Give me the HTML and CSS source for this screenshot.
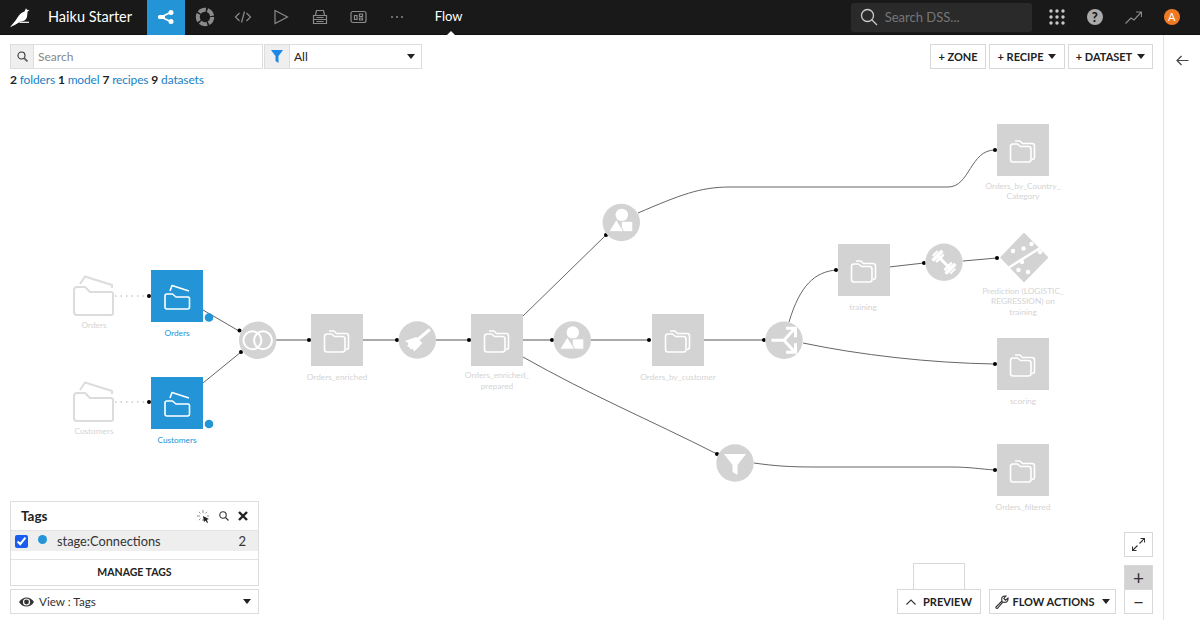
FILE: index.html
```html
<!DOCTYPE html>
<html lang="en">
<head>
<meta charset="utf-8">
<title>Haiku Starter - Flow</title>
<link rel="stylesheet" href="styles.css">
</head>
<body>
<div class="app">
  <header class="topbar">
    <div class="logo">
      <svg width="37" height="35" viewBox="0 0 37 35"><path class="fill-w" d="M10 27.200C13 23.500 15.500 21 17.500 17.500C19.500 14 22 12 24.500 11.500L26 8.300L27 9.800L29.500 10.300L27.600 11.600L27 17C26.200 20 23.500 21.600 20 21.700C17 23.800 13.500 25.800 10 27.200Z"/><path class="line-w" d="M19.500 22.300H29"/></svg>
    </div>
    <div class="project">Haiku Starter</div>
    <nav class="nav">
      <a class="nav-item active"><svg width="18" height="14" viewBox="0 0 18 14"><path class="line-w2" d="M4 7L13.500 2.500M4 7L13.500 11.500"/><rect class="fill-w" x="1" y="5" width="7" height="4" rx="1.500"/><circle class="fill-w" cx="14" cy="2.500" r="2.500"/><circle class="fill-w" cx="14" cy="11.500" r="2.500"/></svg></a>
      <a class="nav-item"><svg width="20" height="20" viewBox="0 0 20 20"><circle class="ring" cx="10" cy="10" r="7.200"/></svg></a>
      <a class="nav-item"><svg width="18" height="14" viewBox="0 0 18 14"><path class="line-g" d="M5.500 3L1.500 7L5.500 11M12.500 3L16.500 7L12.500 11M10.500 1.500L7.500 12.500"/></svg></a>
      <a class="nav-item"><svg width="16" height="16" viewBox="0 0 16 16"><path class="line-g" d="M2 1.500L14.500 8L2 14.500Z"/></svg></a>
      <a class="nav-item"><svg width="16" height="16" viewBox="0 0 16 16"><path class="line-g" d="M3.500 6L4.500 1.500H11.500L12.500 6M1.500 6.500H14.500V10.500H1.500ZM1.500 10.500V14.500H14.500V10.500M4.500 8.500H11.500M4.500 12.500H11.500"/></svg></a>
      <a class="nav-item"><svg width="17" height="14" viewBox="0 0 17 14"><rect class="line-g" x="1" y="1.500" width="15" height="11" rx="2"/><path class="line-g" d="M4.500 5.500V9.500H7V5.500ZM9.500 4H12.500V6.500H9.500ZM9.500 8H12.500V10H9.500Z"/></svg></a>
      <a class="nav-item"><svg width="14" height="4" viewBox="0 0 14 4"><circle class="fill-g" cx="2" cy="2" r="1"/><circle class="fill-g" cx="7" cy="2" r="1"/><circle class="fill-g" cx="12" cy="2" r="1"/></svg></a>
    </nav>
    <div class="section-title">Flow<span class="caret-up"></span></div>
    <div class="global-search">
      <svg width="18" height="18" viewBox="0 0 18 18"><circle class="line-lg" cx="7.500" cy="7.500" r="6"/><path class="line-lg" d="M12 12L17 17"/></svg>
      <span>Search DSS...</span>
    </div>
    <div class="top-icons">
      <svg class="top-icon" width="16" height="16" viewBox="0 0 16 16"><g class="fill-lg"><circle cx="2" cy="2" r="1.700"/><circle cx="8" cy="2" r="1.700"/><circle cx="14" cy="2" r="1.700"/><circle cx="2" cy="8" r="1.700"/><circle cx="8" cy="8" r="1.700"/><circle cx="14" cy="8" r="1.700"/><circle cx="2" cy="14" r="1.700"/><circle cx="8" cy="14" r="1.700"/><circle cx="14" cy="14" r="1.700"/></g></svg>
      <span class="help">?</span>
      <svg class="top-icon" width="17" height="13" viewBox="0 0 17 13"><path class="line-g" d="M0.500 12.500L6 7L9 9L16 1.500M11 1H16.500V6"/></svg>
      <span class="avatar">A</span>
    </div>
  </header>
  <main class="main">
    <section class="canvas">
      <svg class="flow" width="1163" height="585" viewBox="0 35 1163 585">
        <defs>
          <symbol id="dataset" viewBox="0 0 52 52"><rect width="52" height="52" fill="#d3d3d3"/><path class="ico" d="M13.500 22.500a2.500 2.500 0 0 1 2.500-2.500h4.500l3 2.500h8a2.500 2.500 0 0 1 2.500 2.500v10.500a2.500 2.500 0 0 1-2.500 2.500H16a2.500 2.500 0 0 1-2.500-2.500ZM18 17h5l2.500 2.500h9.500a2.500 2.500 0 0 1 2.500 2.500v11a2.500 2.500 0 0 1-2.500 2.500"/></symbol>
          <symbol id="folder-sel" viewBox="0 0 52 52"><rect width="52" height="52" fill="#2394d6"/><path class="ico" d="M14 26a2 2 0 0 1 2-2h5.500l3.500 3h12a1.500 1.500 0 0 1 1.500 1.500V37a2 2 0 0 1-2 2H16a2 2 0 0 1-2-2ZM19 21L21 15.500L38 21"/></symbol>
          <symbol id="folder-src" viewBox="0 0 42 42"><path class="src" d="M1 15a3 3 0 0 1 3-3h8l5 5h21a2 2 0 0 1 2 2v19a2 2 0 0 1-2 2H4a3 3 0 0 1-3-3ZM7 9L12 1.500L39 10V13"/></symbol>
          <g id="group-ico"><circle fill="#fff" cx="0.500" cy="-7.500" r="6.200"/><rect fill="#fff" stroke="#d3d3d3" x="0" y="-1.200" width="11.500" height="10.400"/><path fill="#fff" stroke="#d3d3d3" d="M-12.500 9.200L-5-3L2.500 9.200Z"/></g>
        </defs>
        <g class="dotted"><path d="M115 296H149M115 402H149"/></g>
        <g class="edge">
          <path d="M203 310L239 331M203 383L241 352"/>
          <path d="M523 316L606 235M638 213C680 195 700 187 730 187L948 187C970 187 970 150 995 150"/>
          <path d="M523 357C590 395 650 420 717 454M754 463C775 466 790 467 815 467L950 467C970 467 980 469 995 470"/>
          <path d="M789 322C800 285 815 272 836 270M889 267L924 263M963 261L997 258M803 343C860 355 930 363 995 364"/>
        </g>
        <path class="thick" d="M276 340H309M363 340H397M436 340H469M523 340H552M591 340H649M704 340H764"/>
        <g class="dots">
          <circle cx="149" cy="296" r="2"/><circle cx="149" cy="402" r="2"/><circle cx="239.500" cy="330.500" r="2"/><circle cx="241" cy="352" r="2"/><circle cx="309" cy="340" r="2"/><circle cx="397" cy="340" r="2"/><circle cx="469" cy="340" r="2"/><circle cx="552" cy="340" r="2"/><circle cx="649" cy="340" r="2"/><circle cx="764" cy="340" r="2"/><circle cx="606" cy="235" r="2"/><circle cx="995" cy="150" r="2"/><circle cx="717" cy="454" r="2"/><circle cx="995" cy="470" r="2"/><circle cx="836" cy="270" r="2"/><circle cx="924" cy="263" r="2"/><circle cx="997" cy="258" r="2"/><circle cx="995" cy="364" r="2"/>
        </g>
        <use href="#folder-src" x="73" y="275" width="42" height="42"/>
        <use href="#folder-src" x="73" y="381" width="42" height="42"/>
        <use href="#folder-sel" x="151" y="270" width="52" height="52"/>
        <use href="#folder-sel" x="151" y="377" width="52" height="52"/>
        <circle class="tag-dot" cx="209" cy="317.500" r="4.300"/>
        <circle class="tag-dot" cx="209" cy="424" r="4.300"/>
        <use href="#dataset" x="311" y="314" width="52" height="52"/>
        <use href="#dataset" x="471" y="314" width="52" height="52"/>
        <use href="#dataset" x="652" y="314" width="52" height="52"/>
        <use href="#dataset" x="997" y="124" width="52" height="52"/>
        <use href="#dataset" x="838" y="244" width="52" height="52"/>
        <use href="#dataset" x="997" y="338" width="52" height="52"/>
        <use href="#dataset" x="997" y="444" width="52" height="52"/>
        <circle class="recipe" cx="257.700" cy="340.300" r="18.700"/>
        <g transform="translate(257.700 340.300)"><circle class="ico2" cx="-5.300" r="9"/><circle class="ico2" cx="5.300" r="9"/></g>
        <circle class="recipe" cx="417.300" cy="340" r="18.700"/>
        <g transform="translate(417.300 340)" fill="#fff"><path class="ico3" d="M0 0L12.500-10.500"/><path d="M-1-3L5 3L1.500 7L-3 11.500L-5 8.500L-7 9.500L-8 7L-10 6.500L-9 3L-12.500 1Z"/></g>
        <circle class="recipe" cx="572.300" cy="340" r="18.700"/>
        <use href="#group-ico" transform="translate(572.300 340)"/>
        <circle class="recipe" cx="621.300" cy="222.500" r="18.700"/>
        <use href="#group-ico" transform="translate(621.300 222.500)"/>
        <circle class="recipe" cx="784" cy="340.300" r="18.700"/>
        <path class="ico3" transform="translate(784 340.300)" d="M-12.500 0H0L11-12M2-12H11.500V-3M0 0L11 12M2 12H11.500V3"/>
        <circle class="recipe" cx="944" cy="262.300" r="18.700"/>
        <g transform="translate(944 262.300) rotate(45)" fill="#fff"><rect x="-8" y="-1.500" width="16" height="3"/><rect x="-11" y="-7" width="3.500" height="14" rx="1"/><rect x="-7" y="-5.500" width="2.500" height="11" rx="1"/><rect x="7.500" y="-7" width="3.500" height="14" rx="1"/><rect x="4.500" y="-5.500" width="2.500" height="11" rx="1"/><rect x="-13.500" y="-3.500" width="2" height="7"/><rect x="11.500" y="-3.500" width="2" height="7"/></g>
        <circle class="recipe" cx="735" cy="463" r="18.700"/>
        <path transform="translate(735 463)" fill="#fff" d="M-11-9H11L2.500 2V12L-2.500 9V2Z"/>
        <path fill="#d3d3d3" d="M1024 232.500L1048.500 257.500L1024 282.500L1000 257.500Z"/>
        <path class="band" d="M1009 267.500L1040 248"/>
        <g fill="#fff"><circle cx="1013" cy="251" r="2.200"/><circle cx="1023.500" cy="248.500" r="2.200"/><circle cx="1031.500" cy="244" r="2.200"/><circle cx="1040" cy="252" r="2.200"/><circle cx="1022" cy="262" r="2.200"/><circle cx="1018.500" cy="270" r="2.200"/><circle cx="1028" cy="272" r="2.200"/></g>
        <g class="lbl">
          <text x="94" y="328">Orders</text><text x="94" y="434">Customers</text>
          <text x="337" y="380">Orders_enriched</text>
          <text x="497" y="378">Orders_enriched_</text><text x="497" y="389">prepared</text>
          <text x="678" y="380">Orders_by_customer</text>
          <text x="1023" y="189">Orders_by_Country_</text><text x="1023" y="199">Category</text>
          <text x="863" y="310">training</text>
          <text x="1023" y="294">Prediction (LOGISTIC_</text><text x="1023" y="304">REGRESSION) on</text><text x="1023" y="315">training</text>
          <text x="1023" y="404">scoring</text>
          <text x="1023" y="510">Orders_filtered</text>
        </g>
        <g class="lbl sel"><text x="177" y="336">Orders</text><text x="177" y="443">Customers</text></g>
      </svg>

      <div class="toolbar">
        <div class="toolbar-left">
          <div class="filters">
            <div class="searchbox">
              <span class="addon addon-search"><svg width="11" height="11" viewBox="0 0 11 11"><circle class="line-d" cx="4.500" cy="4.500" r="3.500"/><path class="line-d2" d="M7 7L10.500 10.500"/></svg></span>
              <span class="search-input">Search</span>
            </div>
            <div class="selectbox">
              <span class="addon addon-filter"><svg width="12" height="13" viewBox="0 0 12 13"><path fill="#1b87e6" d="M0 0H12L7.500 6V13L4.500 11V6Z"/></svg></span>
              <span class="select-value">All</span><span class="caret"></span>
            </div>
          </div>
          <div class="counts"><b>2</b> <a>folders</a> <b>1</b> <a>model</a> <b>7</b> <a>recipes</a> <b>9</b> <a>datasets</a></div>
        </div>
        <div class="actions">
          <button class="btn zone">+ ZONE</button>
          <button class="btn recipe-btn">+ RECIPE<span class="caret"></span></button>
          <button class="btn dataset-btn">+ DATASET<span class="caret"></span></button>
        </div>
      </div>

      <div class="tags-wrap">
        <div class="tags">
          <div class="tags-head">
            <span class="tags-title">Tags</span>
            <svg class="t-spark" width="13" height="13" viewBox="0 0 13 13"><path class="line-s" d="M6 0V3M6 9V11M0 6H3M1.800 1.800L3.500 3.500M10.200 1.800L8.500 3.500M1.800 10.200L3.500 8.500M12 6H10"/><path fill="#222" d="M6 6L12 9L9.800 9.800L11 12.500L10 13L8.700 10.400L7 12Z"/></svg>
            <svg class="t-search" width="10" height="10" viewBox="0 0 10 10"><circle class="line-d" cx="4" cy="4" r="3.200"/><path class="line-d" d="M6.500 6.500L9.500 9.500"/></svg>
            <svg class="t-close" width="10" height="10" viewBox="0 0 10 10"><path class="line-x" d="M1 1L9 9M9 1L1 9"/></svg>
          </div>
          <label class="tag-row"><input class="tag-check" type="checkbox" checked><span class="tag-color"></span><span class="tag-name">stage:Connections</span><span class="tag-count">2</span></label>
          <div class="manage">MANAGE TAGS</div>
        </div>
        <div class="view-select">
          <svg width="15" height="10" viewBox="0 0 15 10"><path fill="#333" d="M0 5C2 2 4.500 0.500 7.500 0.500S13 2 15 5C13 8 10.500 9.500 7.500 9.500S2 8 0 5Z"/><circle cx="7.500" cy="5" r="3.600" fill="#fff"/><circle cx="7.500" cy="5" r="2.400" fill="#333"/></svg>
          <span class="view-text">View : Tags</span><span class="caret"></span>
        </div>
      </div>

      <div class="controls">
        <div class="preview-wrap">
          <div class="preview-tab"></div>
          <button class="btn preview"><svg width="10" height="6" viewBox="0 0 10 6"><path class="line-d" d="M0.500 5.500L5 1L9.500 5.500"/></svg>PREVIEW</button>
        </div>
        <button class="btn flow-actions"><svg width="14" height="14" viewBox="0 0 14 14"><path class="line-d" d="M1 12L7 6C6 3 7.500 0.500 11 1L8.800 3.500L10.500 5.200L13 3C13.500 6.500 11 8 8 7L2.500 13.300C1.500 13.700 0.500 13 1 12Z"/></svg>FLOW ACTIONS<span class="caret"></span></button>
        <div class="zoom-stack">
          <button class="icon-btn fit"><svg width="13" height="13" viewBox="0 0 13 13"><path class="line-d" d="M7.500 5.500L12.500 0.500M8.500 0.500H12.500V4.500M5.500 7.500L0.500 12.500M0.500 8.500V12.500H4.500"/></svg></button>
          <button class="icon-btn plus">+</button>
          <button class="icon-btn minus">&#8722;</button>
        </div>
      </div>
    </section>
    <aside class="side">
      <svg width="13" height="11" viewBox="0 0 13 11"><path class="line-k" d="M12.500 5.500H1M5.500 1L1 5.500L5.500 10"/></svg>
    </aside>
  </main>
</div>
</body>
</html>
```
FILE: styles.css
```css
* { box-sizing: border-box; }
html, body { margin: 0; height: 100%; overflow: hidden; }
body { font-family: "Lato", "Noto Sans", sans-serif; color: #222; background: #fff; font-size: 12px; }
.app { display: flex; flex-direction: column; width: 1200px; height: 620px; }

.topbar { display: flex; align-items: center; height: 35px; flex: none; background: #191919; color: #fff; border-bottom: 1px solid #111; }
.logo { width: 37px; height: 35px; }
.logo svg { display: block; }
.project { width: 110px; padding: 0 0 2px 11px; font-size: 14.500px; white-space: nowrap; color: #fff; }
.nav { display: flex; height: 35px; }
.nav-item { display: flex; align-items: center; justify-content: center; width: 38.400px; height: 35px; }
.nav-item.active { background: #2394d6; }
.section-title { position: relative; margin-left: 19px; width: 417px; padding-bottom: 2px; font-size: 13px; }
.caret-up { position: absolute; left: 11px; top: 23px; border: 5px solid transparent; border-top: 0; border-bottom-color: #fff; }
.global-search { display: flex; align-items: center; gap: 7px; width: 181px; height: 29px; padding-left: 9px; background: #2a2a2a; border-radius: 3px; color: #777; font-size: 13px; margin-left: -1px; }
.top-icons { display: flex; align-items: center; margin-left: 17px; gap: 22px; }
.help { width: 16px; height: 16px; border-radius: 50%; background: #aaa; color: #191919; font-size: 13px; font-weight: 900; text-align: center; line-height: 16px; }
.avatar { width: 16px; height: 16px; border-radius: 50%; background: #f07a22; color: #fff; font-size: 11px; text-align: center; line-height: 16px; }

.fill-w { fill: #fff; }
.fill-g { fill: #8a8a8a; }
.fill-lg { fill: #c8c8c8; }
.line-w { fill: none; stroke: #fff; stroke-width: 1.200; }
.line-w2 { fill: none; stroke: #fff; stroke-width: 1.500; }
.line-g { fill: none; stroke: #8a8a8a; stroke-width: 1.200; }
.line-lg { fill: none; stroke: #ccc; stroke-width: 1.300; }
.line-d { fill: none; stroke: #333; stroke-width: 1.100; }
.line-d2 { fill: none; stroke: #666; stroke-width: 1.800; }
.line-s { fill: none; stroke: #777; stroke-width: 0.800; }
.line-x { fill: none; stroke: #222; stroke-width: 2.400; }
.line-k { fill: none; stroke: #444; stroke-width: 1.200; }
.ring { fill: none; stroke: #8a8a8a; stroke-width: 4; stroke-dasharray: 7.500 1.550; }

.main { display: flex; flex: 1; min-height: 0; }
.canvas { position: relative; width: 1163px; flex: none; }
.flow { display: block; }
.side { flex: 1; border-left: 1px solid #e4e4e4; padding: 20px 0 0 12px; }
.side svg { display: block; }

.ico { fill: none; stroke: #fff; stroke-width: 1.600; stroke-linejoin: round; }
.ico2 { fill: none; stroke: #fff; stroke-width: 2; }
.ico3 { fill: none; stroke: #fff; stroke-width: 3; }
.band { fill: none; stroke: #fff; stroke-width: 2.500; }
.src { fill: none; stroke: #dcdcdc; stroke-width: 2; stroke-linejoin: round; }
.recipe { fill: #d3d3d3; }
.tag-dot { fill: #2394d6; }
.edge path { fill: none; stroke: #666; stroke-width: 1; }
.thick { fill: none; stroke: #aaa; stroke-width: 2; }
.dotted path { fill: none; stroke: #aaa; stroke-width: 1; stroke-dasharray: 1.500 4; }
.dots circle { fill: #000; }
.lbl text { font-size: 8.300px; fill: #d4d4d4; text-anchor: middle; }
.lbl.sel text { fill: #2394d6; }

.toolbar { position: absolute; top: 9px; left: 10px; right: 10px; display: flex; justify-content: space-between; align-items: flex-start; }
.filters { display: flex; gap: 1px; height: 25px; }
.searchbox, .selectbox { display: flex; align-items: center; border: 1px solid #ddd; height: 25px; }
.searchbox { width: 253px; }
.selectbox { width: 158px; }
.addon { display: flex; align-items: center; justify-content: center; height: 23px; background: #efefef; border-right: 1px solid #ddd; }
.addon-search { width: 23px; }
.addon-filter { width: 25px; }
.search-input { padding-left: 4px; color: #888; font-size: 12px; }
.select-value { flex: 1; padding-left: 4px; font-size: 12px; }
.selectbox .caret { margin-right: 6px; }
.caret { display: inline-block; flex: none; width: 0; height: 0; border: 4px solid transparent; border-bottom: 0; border-top: 5px solid #222; }
.counts { margin-top: 2px; font-size: 12px; letter-spacing: -0.150px; line-height: 18px; color: #222; }
.counts a { color: #1b7fc4; }
.actions { display: flex; gap: 3px; }
.btn { display: flex; align-items: center; justify-content: center; height: 25px; padding: 0; background: #fff; border: 1px solid #d8d8d8; font-family: inherit; font-size: 11px; font-weight: 700; color: #222; white-space: nowrap; }
.btn svg { flex: none; }
.zone { width: 56px; }
.recipe-btn { width: 76px; gap: 5px; }
.dataset-btn { width: 85px; gap: 5px; }

.tags-wrap { position: absolute; left: 10px; bottom: 6px; width: 249px; display: flex; flex-direction: column; gap: 3px; }
.tags { border: 1px solid #ddd; background: #fff; }
.tags-head { display: flex; align-items: center; height: 28px; padding: 0 10px; }
.tags-title { flex: 1; font-size: 13.500px; font-weight: 700; }
.t-spark { margin-right: 9px; }
.t-search { margin-right: 9px; }
.tag-row { display: flex; align-items: center; height: 21px; background: #eee; border-top: 1px solid #e2e2e2; }
.tag-check { width: 13px; height: 13px; margin: 0 0 0 4px; accent-color: #1a5cf0; }
.tag-color { width: 9px; height: 9px; margin: -3px 0 0 10px; border-radius: 50%; background: #2394d6; }
.tag-name { flex: 1; padding-left: 10px; font-size: 12.800px; color: #333; }
.tag-count { padding-right: 12px; font-size: 13px; color: #333; }
.manage { height: 26px; margin-top: 8px; border-top: 1px solid #e2e2e2; font-size: 10.500px; font-weight: 700; line-height: 25px; text-align: center; }
.view-select { display: flex; align-items: center; gap: 5px; height: 25px; padding: 0 7px 0 8px; border: 1px solid #ddd; background: #fff; }
.view-text { flex: 1; padding-bottom: 2px; font-size: 11.700px; color: #333; }

.controls { position: absolute; right: 10px; bottom: 6px; display: flex; align-items: flex-end; gap: 8px; }
.preview-wrap { display: flex; flex-direction: column; align-items: center; }
.preview-tab { width: 52px; height: 26px; border: 1px solid #d8d8d8; border-bottom: 0; background: #fff; }
.preview { width: 84px; gap: 7px; }
.flow-actions { width: 127px; gap: 3px; }
.flow-actions .caret { margin-left: 4px; }
.zoom-stack { display: flex; flex-direction: column; width: 29px; }
.icon-btn { display: flex; align-items: center; justify-content: center; width: 29px; height: 25px; padding: 0; background: #fff; border: 1px solid #d8d8d8; font-family: inherit; font-size: 19px; font-weight: 400; color: #333; line-height: 1; }
.fit { margin-bottom: 8px; }
.plus { background: #d3d3d3; height: 24px; border-bottom: 0; }
```
